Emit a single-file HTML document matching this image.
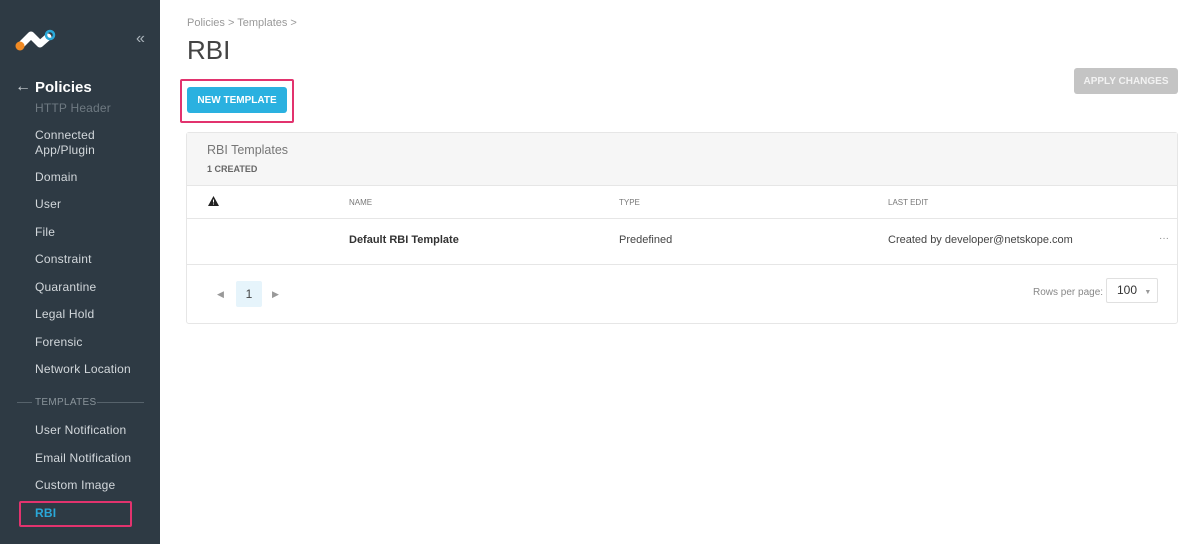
<!DOCTYPE html>
<html><head><meta charset="utf-8"><style>
*{box-sizing:border-box;margin:0;padding:0}
body{width:1200px;height:544px;overflow:hidden;background:#fff;font-family:"Liberation Sans",sans-serif;position:relative}
.sb{position:absolute;left:0;top:0;width:160px;height:544px;background:#2e3a44}
.sb .it{position:absolute;left:35px;font-size:12px;color:#d3d8dc;letter-spacing:0.2px;line-height:15px}
.t{position:absolute;white-space:nowrap}
</style></head><body>
<div class="sb">
 <svg style="position:absolute;left:14px;top:28px" width="44" height="24" viewBox="0 0 44 24">
  <path d="M7 17 L17 7 L26 16 L34 9" stroke="#fff" stroke-width="7" fill="none" stroke-linecap="round" stroke-linejoin="round"/>
  <circle cx="6" cy="18" r="4.5" fill="#f08a24"/>
  <circle cx="36" cy="7" r="4" fill="none" stroke="#2aa8d8" stroke-width="2.5"/>
 </svg>
 <div class="t" style="left:136px;top:30px;color:#aab3ba;font-size:16px">«</div>
 <div class="t" style="left:15px;top:78px;color:#c9cfd4;font-size:16px">←</div>
 <div class="t" style="left:35px;top:79px;color:#fff;font-size:15px;font-weight:bold">Policies</div>
 <div class="it" style="top:101px;color:#6f7a82">HTTP Header</div>
 <div class="it" style="top:128px">Connected<br>App/Plugin</div>
 <div class="it" style="top:170px">Domain</div>
 <div class="it" style="top:197px">User</div>
 <div class="it" style="top:225px">File</div>
 <div class="it" style="top:252px">Constraint</div>
 <div class="it" style="top:280px">Quarantine</div>
 <div class="it" style="top:307px">Legal Hold</div>
 <div class="it" style="top:335px">Forensic</div>
 <div class="it" style="top:362px">Network Location</div>
 <div style="position:absolute;left:17px;top:402px;width:15px;border-top:1px solid #56626b"></div>
 <div class="t" style="left:35px;top:397px;font-size:10px;color:#8a949b;letter-spacing:0.3px">TEMPLATES</div>
 <div style="position:absolute;left:97px;top:402px;width:47px;border-top:1px solid #56626b"></div>
 <div class="it" style="top:423px">User Notification</div>
 <div class="it" style="top:451px">Email Notification</div>
 <div class="it" style="top:478px">Custom Image</div>
 <div style="position:absolute;left:19px;top:501px;width:113px;height:26px;border:2px solid #e2336e;border-radius:2px"></div>
 <div class="it" style="top:506px;color:#2aa8d8;font-weight:bold">RBI</div>
</div>
<div class="t" style="left:187px;top:17px;font-size:11px;color:#999">Policies &gt; Templates &gt;</div>
<div class="t" style="left:187px;top:35px;font-size:26px;color:#444;font-weight:300">RBI</div>
<div style="position:absolute;left:180px;top:79px;width:114px;height:44px;border:2px solid #e2336e;border-radius:2px"></div>
<div style="position:absolute;left:187px;top:87px;width:100px;height:26px;background:#2ab1e0;border-radius:3px;color:#fff;font-size:10px;font-weight:bold;text-align:center;line-height:28px">NEW TEMPLATE</div>
<div style="position:absolute;left:1074px;top:68px;width:104px;height:26px;background:#c4c4c4;border-radius:3px;color:#f2f2f2;font-size:10px;font-weight:bold;text-align:center;line-height:28px">APPLY CHANGES</div>
<div style="position:absolute;left:186px;top:132px;width:992px;height:192px;border:1px solid #e6e6e6;border-radius:3px">
 <div style="height:53px;background:#f6f6f6;border-bottom:1px solid #e6e6e6"></div>
 <div style="position:absolute;left:0;right:0;top:85px;border-top:1px solid #e6e6e6"></div>
 <div style="position:absolute;left:0;right:0;top:131px;border-top:1px solid #e6e6e6"></div>
</div>
<div class="t" style="left:207px;top:143px;font-size:12.5px;color:#777">RBI Templates</div>
<div class="t" style="left:207px;top:164px;font-size:9px;color:#666;font-weight:bold">1 CREATED</div>
<svg style="position:absolute;left:208px;top:196px" width="11" height="10" viewBox="0 0 11 10"><path d="M5.5 0 L11 10 H0 Z" fill="#222"/><rect x="5" y="3.5" width="1" height="3" fill="#fff"/><rect x="5" y="7.5" width="1" height="1" fill="#fff"/></svg>
<div class="t" style="left:349px;top:198px;font-size:8px;color:#777">NAME</div>
<div class="t" style="left:619px;top:198px;font-size:8px;color:#777">TYPE</div>
<div class="t" style="left:888px;top:198px;font-size:8px;color:#777">LAST EDIT</div>
<div class="t" style="left:349px;top:234px;font-size:11px;color:#333;font-weight:bold">Default RBI Template</div>
<div class="t" style="left:619px;top:234px;font-size:11px;color:#444">Predefined</div>
<div class="t" style="left:888px;top:234px;font-size:11px;color:#444">Created by developer@netskope.com</div>
<div class="t" style="left:1159px;top:233px;font-size:10px;color:#888">···</div>
<div class="t" style="left:217px;top:289px;font-size:9px;color:#999">◀</div>
<div style="position:absolute;left:236px;top:281px;width:26px;height:26px;background:#e6f4fb;border-radius:2px;text-align:center;line-height:26px;font-size:12px;color:#444">1</div>
<div class="t" style="left:272px;top:289px;font-size:9px;color:#999">▶</div>
<div class="t" style="left:1033px;top:287px;font-size:10px;color:#888">Rows per page:</div>
<div style="position:absolute;left:1106px;top:278px;width:52px;height:25px;border:1px solid #e0e0e0;border-radius:2px;font-size:12px;color:#333;line-height:23px;padding-left:10px">100 <span style="font-size:7px;color:#999;margin-left:4px">▼</span></div>
</body></html>
